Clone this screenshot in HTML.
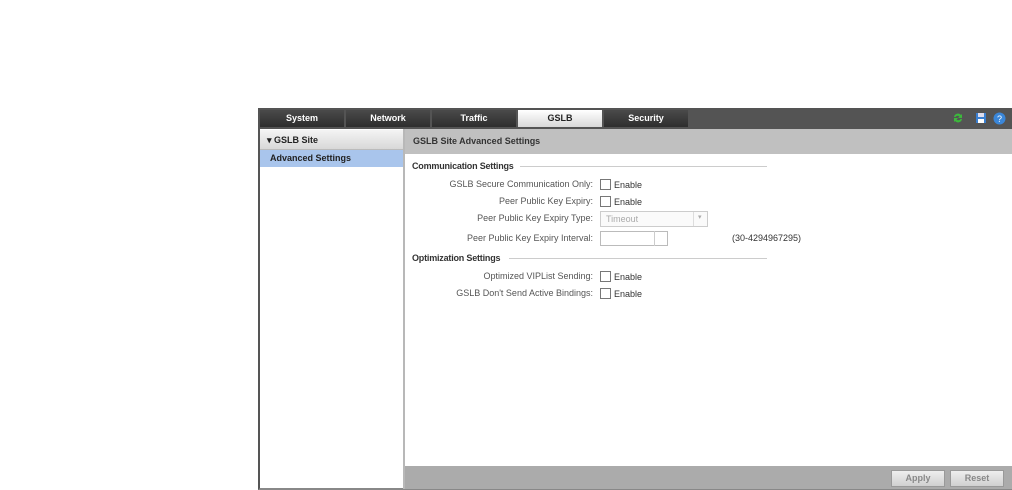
<!DOCTYPE html>
<html><head><style>
*{margin:0;padding:0;box-sizing:border-box}
body{width:1012px;height:490px;background:#fff;font-family:"Liberation Sans",Arial,sans-serif;font-size:9px;color:#222;position:relative;overflow:hidden}
.a{position:absolute}
.tab{position:absolute;top:110px;height:17px;width:84px;background:linear-gradient(#4a4a4a,#2e2e2e);color:#fff;font-weight:bold;text-align:center;line-height:17px;font-size:9px}
.lbl{position:absolute;right:419px;text-align:right;color:#555;font-size:9px}
.cb{position:absolute;left:600px;width:11px;height:11px;border:1px solid #777;background:#fff}
.en{position:absolute;left:614px;font-size:9px;color:#333}
.sec{position:absolute;left:412px;font-weight:bold;font-size:9px;color:#333;letter-spacing:-0.2px}
.line{position:absolute;height:1px;background:#ccc}
.btn{position:absolute;top:470px;height:17px;width:54px;background:linear-gradient(#eee,#d0d0d0);border:1px solid #999;color:#888;text-align:center;line-height:15px;font-size:9px;font-weight:bold}
</style></head><body>
<div class="a" style="left:258px;top:108px;width:754px;height:382px;border-left:2px solid #555;border-bottom:2px solid #888"></div>
<div class="a" style="left:258px;top:108px;width:754px;height:21px;background:#545454"></div>
<div class="tab" style="left:260px">System</div>
<div class="tab" style="left:346px">Network</div>
<div class="tab" style="left:432px">Traffic</div>
<div class="tab" style="left:518px;background:linear-gradient(#fff,#d8d8d8);color:#222">GSLB</div>
<div class="tab" style="left:604px">Security</div>
<svg class="a" style="left:952px;top:112px" width="12" height="12" viewBox="0 0 12 12"><path d="M2 5a4 4 0 0 1 7-2l1-1v4H6l1.5-1.5A2.5 2.5 0 0 0 3.5 5z M10 7a4 4 0 0 1-7 2l-1 1V6h4L4.5 7.5A2.5 2.5 0 0 0 8.5 7z" fill="#3cb83c"/></svg>
<svg class="a" style="left:975px;top:112px" width="12" height="12" viewBox="0 0 12 12"><rect x="1" y="1" width="10" height="10" fill="#3a7fd0"/><rect x="3" y="1" width="6" height="4" fill="#dde"/><rect x="3" y="7" width="6" height="4" fill="#fff"/></svg>
<svg class="a" style="left:993px;top:112px" width="13" height="13" viewBox="0 0 13 13"><circle cx="6.5" cy="6.5" r="6" fill="#3a86d8"/><text x="6.5" y="10" font-size="9" fill="#fff" text-anchor="middle" font-family="Liberation Sans">?</text></svg>
<div class="a" style="left:260px;top:130px;width:143px;height:20px;background:linear-gradient(#f4f4f4,#d8d8d8);border-bottom:1px solid #bbb;font-weight:bold;line-height:20px;padding-left:7px;font-size:9px">▾ GSLB Site</div>
<div class="a" style="left:260px;top:150px;width:143px;height:17px;background:#a9c5ec;font-weight:bold;line-height:16px;padding-left:10px;font-size:9px">Advanced Settings</div>
<div class="a" style="left:403px;top:129px;width:2px;height:360px;background:#b8b8b8"></div>
<div class="a" style="left:405px;top:129px;width:607px;height:25px;background:#c0c0c0;font-weight:bold;color:#333;line-height:25px;padding-left:8px;font-size:9px">GSLB Site Advanced Settings</div>
<div class="a" style="left:405px;top:466px;width:607px;height:23px;background:#ababab"></div>
<div class="btn" style="left:891px">Apply</div>
<div class="btn" style="left:950px">Reset</div>
<div class="sec" style="top:161px">Communication Settings</div>
<div class="line" style="left:520px;top:166px;width:247px"></div>
<div class="lbl" style="top:179px">GSLB Secure Communication Only:</div><div class="cb" style="top:179px"></div><div class="en" style="top:180px">Enable</div>
<div class="lbl" style="top:196px">Peer Public Key Expiry:</div><div class="cb" style="top:196px"></div><div class="en" style="top:197px">Enable</div>
<div class="lbl" style="top:213px">Peer Public Key Expiry Type:</div>
<div class="a" style="left:600px;top:211px;width:108px;height:16px;border:1px solid #ccc;background:#fafafa;color:#aaa;line-height:14px;padding-left:5px">Timeout</div>
<div class="a" style="left:693px;top:212px;width:1px;height:14px;background:#ddd"></div>
<div class="a" style="left:698px;top:213px;color:#aaa;font-size:7px">▾</div>
<div class="lbl" style="top:233px">Peer Public Key Expiry Interval:</div>
<div class="a" style="left:600px;top:231px;width:68px;height:15px;border:1px solid #bbb;background:#fff"></div>
<div class="a" style="left:654px;top:231px;width:1px;height:15px;background:#ccc"></div>
<div class="a" style="left:732px;top:233px;color:#333">(30-4294967295)</div>
<div class="sec" style="top:253px">Optimization Settings</div>
<div class="line" style="left:509px;top:258px;width:258px"></div>
<div class="lbl" style="top:271px">Optimized VIPList Sending:</div><div class="cb" style="top:271px"></div><div class="en" style="top:272px">Enable</div>
<div class="lbl" style="top:288px">GSLB Don't Send Active Bindings:</div><div class="cb" style="top:288px"></div><div class="en" style="top:289px">Enable</div>
</body></html>
